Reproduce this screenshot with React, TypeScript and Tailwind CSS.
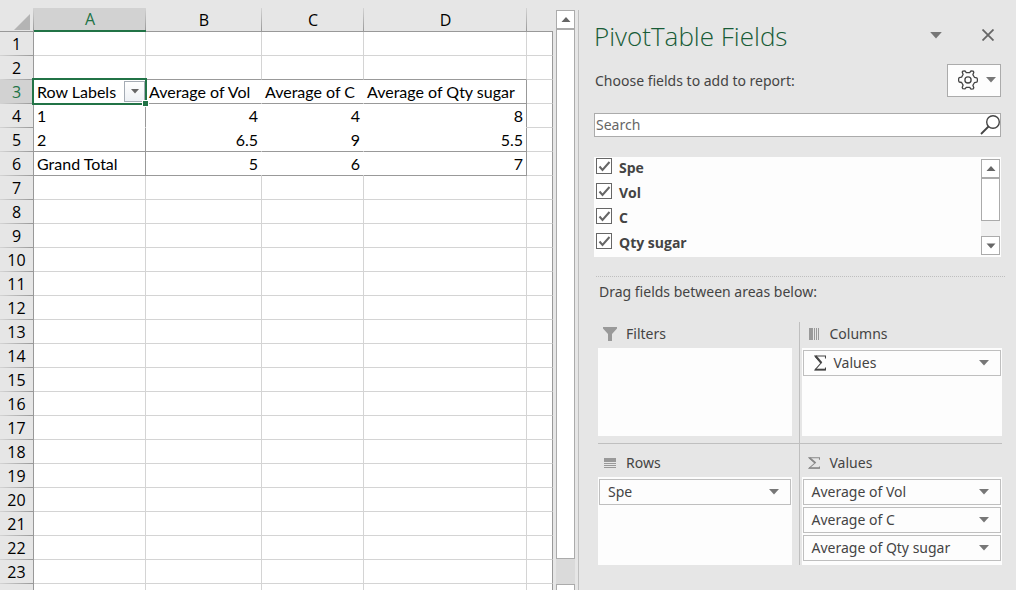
import React, { useState } from "react";

const pivotRows: Record<number, string[]> = {
  3: ["Row Labels", "Average of Vol", "Average of C", "Average of Qty sugar"],
  4: ["1", "4", "4", "8"],
  5: ["2", "6.5", "9", "5.5"],
  6: ["Grand Total", "5", "6", "7"],
};

const columns = ["A", "B", "C", "D"];
const rowNumbers = Array.from({ length: 23 }, (_, i) => i + 1);

function Caret({ className = "h-1.5 w-2.5" }: { className?: string }) {
  return (
    <svg viewBox="0 0 10 6" className={`shrink-0 ${className}`}>
      <path d="M0 0h10L5 5.5z" fill="#777" />
    </svg>
  );
}

function ScrollArrow({ down = false }: { down?: boolean }) {
  return (
    <svg viewBox="0 0 10 6" className="h-1.5 w-2.5">
      <path d={down ? "M0.5 0.5h9L5 5.5z" : "M0.5 5h9L5 0z"} fill="#666" />
    </svg>
  );
}

function SigmaIcon({ className = "" }: { className?: string }) {
  return (
    <svg
      viewBox="0 0 12 16"
      preserveAspectRatio="none"
      className={`shrink-0 ${className}`}
      fill="none"
      stroke="currentColor"
    >
      <path d="M11.5 3.5V1H1l6 7-6 7h10.5v-2.5" strokeWidth="1.1" />
      <path d="M1.5 1l6 7" strokeWidth="2" />
      <path d="M1 14.5h10.5" strokeWidth="1.6" />
    </svg>
  );
}

function cellClass(row: number, col: number) {
  if (row < 3 || row > 6) {
    return row === 2
      ? "border-r border-b border-r-[#d4d4d4] border-b-[#999]"
      : "border-r border-b border-[#d4d4d4]";
  }
  const bottom = row === 4 ? "border-b border-b-transparent" : "border-b border-b-[#999]";
  const right =
    col === 0 || col === 3 ? "border-r border-r-[#999]" : "border-r border-r-transparent";
  const align = row > 3 && col > 0 ? "text-right" : "text-left";
  return `${bottom} ${right} ${align}`;
}

function Sheet() {
  return (
    <div className="min-w-0 flex-1 overflow-hidden pt-2 font-['Lato','Liberation_Sans',sans-serif] text-base text-black">
      <table className="w-full table-fixed border-separate border-spacing-0">
        <colgroup>
          <col className="w-[34px]" />
          <col className="w-[112px]" />
          <col className="w-[116px]" />
          <col className="w-[102px]" />
          <col className="w-[163px]" />
          <col />
        </colgroup>
        <thead>
          <tr className="h-6">
            <td className="border-b border-b-[#999] bg-[linear-gradient(#d4d4d4,#999)] bg-[length:1px_100%] bg-right bg-no-repeat p-0">
              <svg viewBox="0 0 16 16" className="mt-1 mr-1 ml-auto size-4">
                <path d="M16 0v16H0z" fill="#b4b4b4" />
              </svg>
            </td>
            {columns.map((name) => (
              <th
                key={name}
                scope="col"
                className={`bg-[linear-gradient(#d4d4d4,#999)] bg-[length:1px_100%] bg-right bg-no-repeat p-0 font-['Open_Sans','Noto_Sans',sans-serif] text-base/[22px] font-normal ${
                  name === "A"
                    ? "border-b-2 border-b-[#217346] bg-[#d2d2d2] text-[#217346]"
                    : "border-b border-b-[#999]"
                }`}
              >
                {name}
              </th>
            ))}
            <td className="border-b border-b-[#999] p-0" />
          </tr>
        </thead>
        <tbody>
          {rowNumbers.map((row) => (
            <tr key={row} className="h-6">
              <th
                scope="row"
                className={`border-r border-r-[#999] bg-[linear-gradient(90deg,#d4d4d4,#999)] bg-[length:100%_1px] bg-bottom bg-no-repeat p-0 font-['Open_Sans','Noto_Sans',sans-serif] text-base/[23px] font-normal ${
                  row === 3 ? "bg-[#d2d2d2] text-[#217346]" : ""
                }`}
              >
                {row}
              </th>
              {columns.map((name, col) => (
                <td
                  key={name}
                  className={`relative h-6 bg-white p-0 px-[3px] leading-[23px] whitespace-nowrap ${cellClass(row, col)}`}
                >
                  {pivotRows[row]?.[col]}
                  {row === 3 && col === 0 && (
                    <>
                      <button
                        aria-label="Filter row labels"
                        className="absolute top-px right-0 z-10 flex h-[21px] w-[21px] items-center justify-center border border-[#a5acb5] bg-gradient-to-b from-white to-[#eef1f5]"
                      >
                        <svg viewBox="0 0 8 5" className="h-[5px] w-2">
                          <path d="M0 0h8L4 4.5z" fill="#666" />
                        </svg>
                      </button>
                      <span className="pointer-events-none absolute -inset-0.5 z-10 border-2 border-[#217346]" />
                      <span className="absolute -right-1 -bottom-1 z-20 size-[7px] border border-white bg-[#217346]" />
                    </>
                  )}
                </td>
              ))}
              <td className="border-r border-b border-r-[#999] border-b-[#d4d4d4] bg-white p-0" />
            </tr>
          ))}
          {/* Partly scrolled row under the last numbered one */}
          <tr className="h-6">
            <td className="border-r border-r-[#999] p-0" />
            {columns.map((name) => (
              <td key={name} className="border-r border-r-[#d4d4d4] bg-white p-0" />
            ))}
            <td className="border-r border-r-[#999] bg-white p-0" />
          </tr>
        </tbody>
      </table>
    </div>
  );
}

function SheetScrollbar() {
  return (
    <div className="mt-2.5 ml-[3px] flex w-[23px] shrink-0 flex-col border-r border-r-[#bfbfbf] pr-[3px]">
      <button
        aria-label="Scroll up"
        className="flex h-[19px] shrink-0 items-center justify-center border border-[#ababab] bg-white"
      >
        <ScrollArrow />
      </button>
      <div className="flex-1 border border-[#ababab] bg-white" />
      <div className="h-[25px] bg-[#dadada]" />
      <div className="h-1.5 border border-b-0 border-[#ababab] bg-white" />
    </div>
  );
}

function FieldItem({ label, sigma = false }: { label: string; sigma?: boolean }) {
  return (
    <button className="flex h-[26px] w-full items-center justify-between border border-[#bfbfbf] bg-[#fdfdfd] pr-[11px] pl-2 text-left">
      <span className="flex items-center gap-2">
        {sigma && <SigmaIcon className="ml-0.5 h-4 w-3" />}
        {label}
      </span>
      <Caret />
    </button>
  );
}

function Area({
  title,
  icon,
  className,
  children,
}: {
  title: string;
  icon: React.ReactNode;
  className: string;
  children?: React.ReactNode;
}) {
  return (
    <section className={`flex flex-col ${className}`}>
      <h3 className="flex h-[26px] items-center gap-2 pb-[3px]">
        <span className="flex w-5 justify-center pl-1">{icon}</span>
        {title}
      </h3>
      <div className="flex min-h-[88px] flex-col gap-0.5 bg-[#fdfdfd] px-px pt-0.5">
        {children}
      </div>
    </section>
  );
}

const fields = ["Spe", "Vol", "C", "Qty sugar"];

function FieldsPanel() {
  const [search, setSearch] = useState("");
  const [checked, setChecked] = useState<string[]>(fields);

  const toggle = (field: string) => {
    setChecked((prev) =>
      prev.includes(field) ? prev.filter((f) => f !== field) : [...prev, field]
    );
  };

  return (
    <aside className="w-[437px] shrink-0 px-[15px] font-['Noto_Sans','Open_Sans',sans-serif] text-sm text-[#444]">
      {/* Title */}
      <header className="flex h-16 items-center pt-2.5">
        <h2 className="flex-1 font-['Open_Sans','Noto_Sans',sans-serif] text-[26px] font-light text-[#185c37]">
          PivotTable Fields
        </h2>
        <button aria-label="Pane options" className="mr-10 mb-1">
          <Caret className="h-[7px] w-3" />
        </button>
        <button aria-label="Close" className="mr-[7px] mb-1">
          <svg viewBox="0 0 12 12" className="size-3">
            <path d="M0.5 0.5l11 11M11.5 0.5l-11 11" stroke="#666" strokeWidth="1.8" />
          </svg>
        </button>
      </header>

      <div className="flex h-[33px] items-center justify-between">
        <p className="pl-px">Choose fields to add to report:</p>
        <button
          aria-label="Tools"
          className="flex h-[33px] w-[54px] items-center justify-between border border-[#ababab] bg-[#fdfdfd] pr-1 pb-0.5 pl-2.5"
        >
          <svg viewBox="0 0 20 20" className="size-5" fill="none" stroke="#444" strokeWidth="1.3">
            <path
              strokeLinejoin="round"
              d="M4.8 1.1L7 .9l1.3 1.8h3.4L13 .9l2.2.2.6 1.2-.9 2.4 1.5 2.6 2.4.5.6 1.2v2l-.6 1.2-2.4.5-1.5 2.6.9 2.4-.6 1.2-2.2.2-1.3-1.8H8.3L7 18.9l-2.2-.2-.6-1.2.9-2.4-1.5-2.6-2.4-.5-.6-1.2v-2l.6-1.2 2.4-.5 1.5-2.6-.9-2.4z"
            />
            <circle cx="10" cy="9.9" r="3.1" />
          </svg>
          <Caret />
        </button>
      </div>

      {/* Search */}
      <label className="mt-4 flex h-6 items-center border border-[#ababab] bg-white">
        <input
          type="text"
          aria-label="Search fields"
          placeholder="Search"
          value={search}
          onChange={(e) => setSearch(e.target.value)}
          className="min-w-0 flex-1 pl-px outline-none placeholder:text-[#666]"
        />
        <svg viewBox="0 0 20 20" className="size-5" fill="none" stroke="#444" strokeWidth="1.4">
          <circle cx="13" cy="7" r="6.3" />
          <path d="M8.500 11.500L1 19" strokeWidth="1.8" />
        </svg>
      </label>

      {/* Field list */}
      <div className="mt-5 flex h-[100px] justify-between bg-[#fdfdfd]">
        <ul>
          {fields.map((field) => (
            <li key={field} className="h-[25px] pt-px pl-0.5">
              <label className="flex items-start gap-[7px] font-['Open_Sans','Noto_Sans',sans-serif] font-bold">
                <span className="relative size-4">
                  <input
                    type="checkbox"
                    checked={checked.includes(field)}
                    onChange={() => toggle(field)}
                    className="peer block size-4 appearance-none border border-[#666] bg-white"
                  />
                  <svg
                    viewBox="0 0 16 16"
                    className="pointer-events-none absolute inset-0 hidden size-4 peer-checked:block"
                  >
                    <path d="M3.5 8.5L6.5 12L13.500 4" fill="none" stroke="#666" strokeWidth="2" />
                  </svg>
                </span>
                {field}
              </label>
            </li>
          ))}
        </ul>
        <div className="my-0.5 mr-px flex w-[19px] flex-col bg-[#f0f0f0]">
          <button
            aria-label="Scroll fields up"
            className="flex h-[19px] items-center justify-center border border-[#ababab] bg-white"
          >
            <ScrollArrow />
          </button>
          <div className="h-[43px] border border-[#ababab] bg-white" />
          <button
            aria-label="Scroll fields down"
            className="mt-auto flex h-[19px] items-center justify-center border border-[#ababab] bg-white"
          >
            <ScrollArrow down />
          </button>
        </div>
      </div>

      {/* Areas */}
      <div className="mt-[19px] -mr-1 ml-0.5 border-t border-dotted border-[#bfbfbf]" />
      <p className="mt-[5px] pl-[5px]">Drag fields between areas below:</p>
      <div className="mt-5 -mr-px ml-1 grid grid-cols-[202fr_203fr]">
        <Area
          title="Filters"
          className="border-r border-b border-[#bfbfbf] pr-[7px] pb-[7px]"
          icon={
            <svg viewBox="0 0 14 14" className="size-3.5">
              <path d="M0 0h14v1.5L9 7v7H5V7L0 1.5z" fill="#999" />
            </svg>
          }
        />
        <Area
          title="Columns"
          className="border-b border-[#bfbfbf] pb-[7px] pl-0.5"
          icon={
            <svg viewBox="0 0 12 12" className="size-3" fill="#999">
              <path d="M1 0h4v12H1zM6 0h1v12H6zM8 0h1v12H8zM10 0h1v12h-1z" />
            </svg>
          }
        >
          <FieldItem label="Values" sigma />
        </Area>
        <Area
          title="Rows"
          className="border-r border-[#bfbfbf] pt-[7px] pr-[7px]"
          icon={
            <svg viewBox="0 0 12 10" className="h-2.5 w-3" fill="#999">
              <path d="M0 0h12v4H0zM0 5h12v1H0zM0 7h12v1H0zM0 9h12v1H0z" />
            </svg>
          }
        >
          <FieldItem label="Spe" />
        </Area>
        <Area
          title="Values"
          className="pt-[7px] pl-0.5"
          icon={<SigmaIcon className="h-3 w-3 text-[#888]" />}
        >
          <FieldItem label="Average of Vol" />
          <FieldItem label="Average of C" />
          <FieldItem label="Average of Qty sugar" />
        </Area>
      </div>
    </aside>
  );
}

export default function App() {
  return (
    <main className="flex h-screen overflow-hidden bg-[#e6e6e6]">
      <Sheet />
      <SheetScrollbar />
      <FieldsPanel />
    </main>
  );
}
